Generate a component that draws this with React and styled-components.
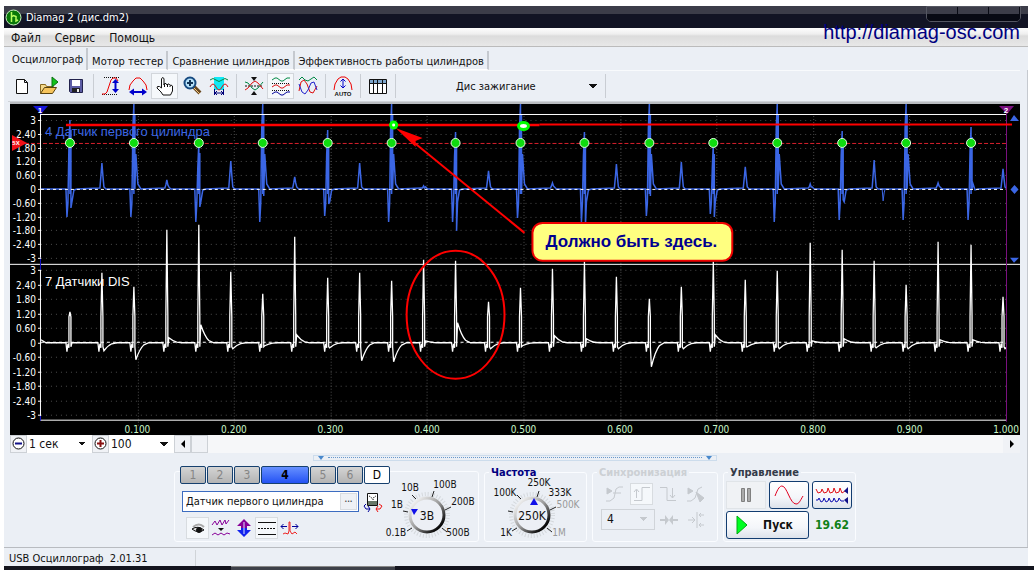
import { useState } from 'react'
import styled, { createGlobalStyle, css } from 'styled-components'

const channels = ['1', '2', '3', '4', '5', '6', 'D']
const tabs = ['Осциллограф', 'Мотор тестер', 'Сравнение цилиндров', 'Эффективность работы цилиндров']
const scale = ['3', '2.40', '1.80', '1.20', '0.60', '0', '-0.60', '-1.20', '-1.80', '-2.40', '-3']

// one entry per spark: [top, dip before, dip after]
const firstCylinder = [
    [16, 113, 104], [59, 85, 85], [0, 113, 85], [76, 85, 87], [39, 118, 103], [57, 85, 85],
    [0, 118, 92], [73, 85, 85], [26, 112, 100], [59, 85, 85], [0, 118, 85], [82, 85, 85],
    [28, 118, 127], [67, 85, 85], [0, 114, 90], [79, 85, 85], [28, 118, 122], [60, 85, 85],
    [0, 112, 92], [58, 85, 85], [40, 110, 113], [63, 85, 85], [0, 118, 85], [80, 85, 85],
    [27, 116, 96], [56, 85, 85], [0, 116, 85], [79, 85, 85], [23, 116, 85], [65, 85, 85],
]

// one entry per spark: [top, offset of the tail from zero]
const dis = [
    [208, 0], [169, 8], [183, 17], [126, -5], [121, -18], [168, 6], [190, 3], [133, -8],
    [174, 5], [169, 18], [177, 19], [156, -2], [157, -20], [198, 6], [184, 3], [165, -7],
    [158, -4], [173, 6], [195, 24], [183, 6], [158, -8], [176, 4], [167, 6], [139, -2],
    [146, -4], [157, 5], [181, 6], [138, -3], [141, -3], [193, 6],
]

const sparkX = i => Math.round(60 + i * 32.2)

const bluePath = firstCylinder.reduce((path, [top, before, after], i) => {
    const x = sparkX(i)

    // idle cylinder: only a short crosstalk peak
    if (i % 2) {
        return path + `L${x - 2} 84 L${x - 1} ${Math.round((top + 85) / 2)} L${x} ${top} L${x + 1} ${Math.round((top + 85) / 2)} L${x + 2} 83 L${x + 4} 85 `
    }

    const tail = top === 0 ? `L${x + 1} ${after} L${x + 2} 50 L${x + 4} 80` : `L${x + 1} ${after} L${x + 2} ${after > 90 ? 98 : 80} L${x + 4} 86`
    return path + `L${x - 4} 85 L${x - 3} ${before} L${x - 2} 99 L${x - 1} ${top + 24} L${x} ${top} L${x} 90 L${x + 1} ${top + 10} ${tail} L${x + 7} 85 `
}, 'M31 85 ')

const whitePath = dis.reduce((path, [top, tail], i) => {
    const x = sparkX(i)
    return path + `L${x - 4} 239 L${x - 3} 248 L${x - 2} 240 L${x - 1} 244 L${x - 1} 213 L${x} ${top} L${x + 1} 213 L${x + 1} 243 ` +
        `L${x + 2} ${239 + tail} Q${x + 6} ${239 + tail / 3} ${x + 10} ${239 + tail / 8} L${x + 15} 239 `
}, 'M31 236 L36 239 ')

const Icon = ({ children, size = 20 }) => (
    <svg width={size} height={size} viewBox="0 0 20 20" fill="none" stroke="#111" aria-hidden="true">{children}</svg>
)

const NewIcon = () => <Icon><path d="M4.500 3.500h8l3 3v11h-11z M12.500 3.500v3h3" fill="#fff" /></Icon>
const OpenIcon = () => (
    <Icon>
        <path d="M1.500 17.500v-9h5l1 2h7v3" fill="#f4d98b" stroke="#8a6a20" />
        <path d="M1.500 17.500l4-6h12l-4 6z" fill="#f6c45c" stroke="#59420e" />
        <path d="M13 1l6 5-6 5z" fill="#12c21a" stroke="#087010" />
    </Icon>
)
const SaveIcon = () => (
    <Icon>
        <path d="M3.500 3.500h13v13h-12l-1-1z" fill="#5c5ca4" stroke="#22224c" />
        <path d="M6 4h8v6H6z" fill="#fff" stroke="none" />
        <path d="M6 12h8v4H6z" fill="#222" stroke="none" />
        <path d="M11 13h2v3h-2z" fill="#eee" stroke="none" />
    </Icon>
)
const RiseIcon = () => (
    <Icon>
        <path d="M3 1.500h15M1 18.500h16" strokeDasharray="1 1" />
        <path d="M1 18h3l2-2 2-6 2-6 2-2h3l2 3" stroke="#e00" />
        <path d="M14.500 5v10" stroke="#00c" strokeWidth="2" />
        <path d="M11 7l3.500-4L18 7zM11 13l3.500 4 3.500-4z" fill="#00c" stroke="none" />
    </Icon>
)
const SpanIcon = () => (
    <Icon>
        <path d="M1 14l1-5 3-4 3-3h4l3 3 3 4 1 5" stroke="#e00" />
        <path d="M5 16h10" stroke="#00c" strokeWidth="2" />
        <path d="M6 12.500L1 16l5 3.500zM14 12.500L19 16l-5 3.500z" fill="#00c" stroke="none" />
    </Icon>
)
const HandIcon = () => (
    <Icon>
        <path d="M6.500 12V3l1-1.500 1.500 1V9l.5-1.500h1.500L12 9l1-1h1l1 1.500 1-.5 1.500 1v5l-2 4H8l-2-3-4-4 .5-1.500h2z" fill="#fff" />
        <path d="M9.500 8v3M12.500 9v2M15 10v1" />
    </Icon>
)
const ZoomIcon = () => (
    <Icon>
        <path d="M12 11l6 6" stroke="#6b4a22" strokeWidth="4" />
        <path d="M12 12l6 6" stroke="#f1ca87" strokeWidth="1" />
        <circle cx="8" cy="7" r="5.500" fill="#b7e3fb" stroke="#174a80" strokeWidth="2" />
        <path d="M5 7h6M8 4v6" stroke="#135" strokeWidth="2" />
    </Icon>
)
const WindowIcon = () => (
    <Icon>
        <path d="M5 1h10v13H5z" fill="#12e8f4" stroke="none" />
        <path d="M1 4q3-3 6 0t6 0 6 0" stroke="#084" />
        <path d="M1 11q3-6 6 0t6 0 6 0" stroke="#d11" />
        <path d="M5.500 13v6M14.500 13v6M6 17h8M8 15l-2 2 2 2M12 15l2 2-2 2" stroke="#007" />
    </Icon>
)
const CrossIcon = () => (
    <Icon>
        <path d="M1 10h18" strokeDasharray="2 1" />
        <path d="M1 6l3 1 4 5 3 2 3-2 5-6" stroke="#084" />
        <path d="M1 14l3-2 4-5 3-2 3 2 5 6" stroke="#d11" />
        <path d="M7 1h6l-3 4zM7 19h6l-3-4z" fill="#111" stroke="none" />
    </Icon>
)
const StackIcon = () => (
    <Icon>
        <path d="M1 4l3-2h2l4 3h2l4-3h3" stroke="#084" />
        <path d="M1 7.500h18M1 14.500h18" strokeDasharray="1 1" />
        <path d="M1 11l3-2h2l4 3h2l4-3h3" stroke="#d11" />
        <path d="M1 18l3-2h2l4 3h2l4-3h3" stroke="#009" />
    </Icon>
)
const OverlayIcon = () => (
    <Icon>
        <path d="M1 4l3-3 3 3 3 1 3-2 3-2 3 3" stroke="#084" />
        <path d="M1 15l2-9 3-2 3 4 3 8 3 1 4-7" stroke="#d11" />
        <path d="M1 8l3 8 3 2 3-4 3-7 3-1 3 8" stroke="#22c" />
    </Icon>
)
const AutoIcon = () => (
    <Icon>
        <path d="M1 14l1-6 3-5 3-2h4l3 2 3 5 1 6" stroke="#e00" />
        <path d="M10 4v7M7.500 5.500L10 3l2.500 2.500M7.500 9.500L10 12l2.500-2.500" stroke="#00c" />
        <text x="10" y="20" textAnchor="middle" fontSize="6" fontWeight="700" fontFamily="Liberation Sans, sans-serif" fill="#111" stroke="none">AUTO</text>
    </Icon>
)
const TableIcon = () => (
    <Icon>
        <path d="M1.500 3.500h17v14h-17z" fill="#fff" />
        <path d="M2 4h16v3H2z" fill="#7ea6cc" stroke="none" />
        <path d="M1.500 7.500h17M5.500 4v13M9.500 4v13M14.500 4v13" />
    </Icon>
)
const DeviceIcon = () => (
    <Icon>
        <path d="M4.500 1.500h10v12h-10z" fill="#fff" />
        <path d="M5 9h9v4H5z" fill="#687868" stroke="none" />
        <path d="M6 4l2 1 2 3 1-3 2-1" strokeDasharray="1 1" />
        <path d="M3 12l-2 2 2 3h4M5 14l2 3-2 3" stroke="#009" />
        <path d="M16 12l3 2-2 3h-4M15 14l-2 3 2 3" stroke="#e11" />
    </Icon>
)
const EyeIcon = () => (
    <Icon>
        <path d="M5 9q6-5 11 0" stroke="#aaa" strokeWidth="2" />
        <path d="M4 11q6-4 12 1-6 4-12-1z" fill="#ddd" />
        <circle cx="11" cy="12" r="2.500" fill="#111" />
    </Icon>
)
const NoiseIcon = () => (
    <Icon>
        <path d="M1 7l3-4 2 4 3-5 2 5 3-5 1 4 3-4" stroke="#809" />
        <path d="M7 10h6l-3 3z" fill="#111" stroke="none" />
        <path d="M1 17l3-2 3 2 3-2 3 2 3-2 3 1" stroke="#809" />
    </Icon>
)
const HeightIcon = () => (
    <Icon>
        <path d="M10 1l7 7h-4v3H7V8H3z" fill="#809" stroke="none" />
        <path d="M7 10h6v2h4l-7 7-7-7h4z" fill="#12e" stroke="none" />
        <path d="M10 4v12" stroke="#dce4ff" />
    </Icon>
)
const LinesIcon = () => <Icon><path d="M1 4.500h18M1 16.500h18" /><path d="M1 10.500h18" strokeDasharray="2 1" /></Icon>
const PulseIcon = () => (
    <Icon>
        <path d="M3 16l2-1 3 1 1-3V4h1v9l2 3 3-2 2 2" stroke="#e22" />
        <path d="M1 8.500h6M3.500 6L1 8.500 3.500 11" stroke="#009" />
        <path d="M12 8.500h6M15.500 6L18 8.500 15.500 11" stroke="#009" />
    </Icon>
)

const Knob = ({ value, marks, muted = [], pointer, id }) => (
    <KnobArt viewBox="8 0 88 68" role="img" aria-label={value}>
        <defs>
            <linearGradient id={id} x1="0" y1="0" x2="1" y2="1">
                <stop offset="0.1" stopColor="#f4f4f4" />
                <stop offset="0.5" stopColor="#999" />
                <stop offset="0.85" stopColor="#0a0a0a" />
            </linearGradient>
        </defs>
        <circle cx="45" cy="41" r="21" fill="none" stroke="#d4d8dc" strokeWidth="4" strokeDasharray="1 2" />
        <circle cx="45" cy="41" r="18" fill="#eceff5" />
        <circle cx="45" cy="41" r="17" fill="none" stroke={`url(#${id})`} strokeWidth="3" />
        <path d="M21 37l5 1M30 54l-5 3M30 21l4 4M52 17l-2 6M63 36l6-3M60 54l5 4" stroke="#222" fill="none" />
        <path d={pointer} fill="#1010e8" />
        <text x="45" y="46" textAnchor="middle" fontSize="12">{value}</text>
        {marks.map(([label, x, y]) => (
            <text key={label} x={x} y={y} fontSize="10" textAnchor="middle" fill={muted.includes(label) ? '#999' : '#111'}>{label}</text>
        ))}
    </KnobArt>
)

const Chart = () => (
    <Scope viewBox="0 0 1011 331" role="img" aria-label="Осциллограмма">
        <clipPath id="plot"><path d="M31 0H997V331H31z" /></clipPath>
        <g stroke="#4c4c4c" strokeDasharray="1 4">
            {scale.map((_, i) => <path key={i} d={`M31 ${Math.round(16 + i * 13.8) + 0.5}H997M31 ${Math.round(166 + i * 14.5) + 0.5}H997`} />)}
        </g>
        <g stroke="#4c4c4c" strokeDasharray="1 2">
            {[1, 2, 3, 4, 5, 6, 7, 8, 9].map(i => <path key={i} d={`M${Math.round(31 + i * 96.6) + 0.5} 12V322`} />)}
        </g>
        <path d="M15 39.500H997" stroke="#d8202c" strokeDasharray="4 2" />
        <path d="M31 238.500H997" stroke="#fff" strokeDasharray="3 3" />
        <g clipPath="url(#plot)" fill="none">
            <path d={bluePath} stroke="#3b66e4" strokeWidth="1.500" />
            <path d="M31 85.500H997" stroke="#fff" strokeDasharray="3 3" />
            <path d="M873 85l1 12 1-8 1-4" stroke="#3b66e4" />
            <path d={whitePath} stroke="#fff" strokeWidth="1.300" />
        </g>
        <path d="M31 10.500H997M0 160.500H1011M31 316.500H997M30.500 10V154M30.500 166V317" stroke="#fff" fill="none" />
        <path d="M30.500 3V10M30.500 154V166M30.500 312V317" stroke="#1010c8" />
        <path d="M997.500 4V318" stroke="#7a1080" />
        {scale.map((label, i) => (
            <g key={label} fontSize="10" fill="#fff" textAnchor="end">
                <path d={`M28 ${Math.round(16 + i * 13.8) + 0.5}h3M28 ${Math.round(166 + i * 14.5) + 0.5}h3`} stroke="#fff" />
                <text x="26" y={Math.round(20 + i * 13.8)}>{label}</text>
                <text x="26" y={Math.round(170 + i * 14.5)}>{label}</text>
            </g>
        ))}
        {[1, 2, 3, 4, 5, 6, 7, 8, 9, 10].map(i => (
            <text key={i} x={31 + i * 96.6} y="329" fontSize="10" fill="#c9f7c9" textAnchor="middle">{(i / 10).toFixed(3)}</text>
        ))}
        <g fontFamily="Liberation Sans, Arial, sans-serif" fontSize="13">
            <text x="35" y="32" fill="#3b66e4">4 Датчик первого цилиндра</text>
            <text x="35" y="182" fill="#fff">7 Датчики DIS</text>
        </g>
        <path d="M23 2h15l-7 8z" fill="#1414d8" />
        <path d="M990 2h15l-7 8z" fill="#7a1080" />
        <path d="M2 31l15 8-15 8z" fill="#f01018" />
        <g fontFamily="Liberation Sans, Arial, sans-serif" fontSize="8" fontWeight="700" fill="#fff" textAnchor="middle">
            <text x="30" y="9">1</text>
            <text x="997" y="9">2</text>
            <text x="6" y="41" fontSize="6">5X</text>
        </g>
        <path d="M1001 17l4-6 5 6zM1001 154l4 5 5-5zM1005.500 81l4 4.500-4 4.500-4-4.500z" fill="#3b66e4" />
        {firstCylinder.map((_, i) => i % 2 === 0 && (
            <circle key={i} cx={sparkX(i)} cy="39" r="4.500" fill="#0fdc0f" stroke="#dfffdf" />
        ))}
        <path d="M56 21H530" stroke="#f00" strokeWidth="2.500" />
        <path d="M530 20.500H1003" stroke="#f00" strokeWidth="2" />
        <path d="M515 129L394 30" stroke="#f00" strokeWidth="2" />
        <path d="M386 24l27 10-7 3 0 6z" fill="#f00" />
        <ellipse cx="446" cy="211" rx="49" ry="64" fill="none" stroke="#f00" strokeWidth="2" />
        <g fill="#fff" stroke="#0f0" strokeWidth="3">
            <ellipse cx="384" cy="21" rx="3" ry="3" />
            <ellipse cx="514" cy="22" rx="5" ry="3.500" />
        </g>
        <rect x="523" y="119" width="200" height="38" rx="10" fill="#ffff80" stroke="#e00" strokeWidth="2" />
        <text x="622" y="143" textAnchor="middle" fontFamily="Liberation Sans, Arial, sans-serif" fontSize="17" fontWeight="700" fill="#000090">Должно быть здесь.</text>
    </Scope>
)

function App() {
    const [tab, setTab] = useState(tabs[0])
    const [channel, setChannel] = useState('4')
    const [name, setName] = useState('Датчик первого цилиндра')

    return (
        <Page>
            <GlobalStyle />
            <Window>
                <TitleBar>
                    <svg width="17" height="17" viewBox="0 0 17 17" fill="none" aria-hidden="true">
                        <circle cx="8.500" cy="8.500" r="7.500" fill="#087808" stroke="#c8f0c0" />
                        <path d="M6.500 3v10M6.500 8l2-1.500 2.500 1V12l2-1" stroke="#b8ff60" strokeWidth="1.500" />
                    </svg>
                    <Title>Diamag 2 (дис.dm2)</Title>
                    <WindowButtons>
                        <button aria-label="Свернуть" />
                        <button aria-label="Развернуть" />
                        <button aria-label="Закрыть" />
                    </WindowButtons>
                </TitleBar>
                <SiteLink href="http://diamag-osc.com">http://diamag-osc.com</SiteLink>

                <MenuBar>
                    <button>Файл</button>
                    <button>Сервис</button>
                    <button>Помощь</button>
                </MenuBar>

                <Tabs role="tablist">
                    {tabs.map(label => (
                        <Tab key={label} role="tab" aria-selected={label === tab} $active={label === tab} onClick={() => setTab(label)}>{label}</Tab>
                    ))}
                </Tabs>

                <Body>
                    <Toolbar>
                        <ToolButton aria-label="Новый"><NewIcon /></ToolButton>
                        <ToolButton aria-label="Открыть"><OpenIcon /></ToolButton>
                        <ToolButton aria-label="Сохранить"><SaveIcon /></ToolButton>
                        <Separator />
                        <ToolButton aria-label="Амплитуда"><RiseIcon /></ToolButton>
                        <ToolButton aria-label="Период"><SpanIcon /></ToolButton>
                        <ToolButton $pressed aria-label="Рука"><HandIcon /></ToolButton>
                        <ToolButton aria-label="Масштаб"><ZoomIcon /></ToolButton>
                        <ToolButton aria-label="Окно"><WindowIcon /></ToolButton>
                        <Separator />
                        <ToolButton aria-label="Сжать"><CrossIcon /></ToolButton>
                        <ToolButton $pressed aria-label="Раздельно"><StackIcon /></ToolButton>
                        <ToolButton aria-label="Совместно"><OverlayIcon /></ToolButton>
                        <Separator />
                        <ToolButton aria-label="Авто"><AutoIcon /></ToolButton>
                        <Separator />
                        <ToolButton aria-label="Таблица"><TableIcon /></ToolButton>
                        <Separator />
                        <PresetSelect aria-label="Режим"><option>Дис зажигание</option></PresetSelect>
                        <Separator />
                    </Toolbar>

                    <ScopeFrame>
                        <Chart />
                        <ScrollRow>
                            <SmallButton aria-label="Уменьшить">
                                <svg width="13" height="13" viewBox="0 0 13 13" fill="none"><circle cx="6.500" cy="6.500" r="5.500" fill="#fff" stroke="#111" /><path d="M3 6.500h7" stroke="#118" strokeWidth="2" /></svg>
                            </SmallButton>
                            <RangeSelect aria-label="Длительность"><option>1 сек</option></RangeSelect>
                            <SmallButton aria-label="Увеличить">
                                <svg width="13" height="13" viewBox="0 0 13 13" fill="none"><circle cx="6.500" cy="6.500" r="5.500" fill="#fff" stroke="#111" /><path d="M3 6.500h7M6.500 3v7" stroke="#811" strokeWidth="2" /></svg>
                            </SmallButton>
                            <RangeSelect aria-label="Масштаб, %"><option>100</option></RangeSelect>
                            <SmallButton aria-label="Влево"><svg width="6" height="8" viewBox="0 0 6 8"><path d="M5 0v8L1 4z" /></svg></SmallButton>
                            <SmallButton aria-label="Ползунок" />
                            <Track />
                            <SmallButton $flat aria-label="Вправо"><svg width="6" height="8" viewBox="0 0 6 8"><path d="M1 0v8l4-4z" /></svg></SmallButton>
                        </ScrollRow>
                    </ScopeFrame>

                    <Splitter aria-label="Свернуть панель"><i /><span /><i /></Splitter>

                    <Controls>
                        <ChannelGroup>
                            <ChannelPart>
                                <ChannelRow>
                                    {channels.map(c => (
                                        <ChannelButton key={c} $active={c === channel} $light={c === 'D'} onClick={() => setChannel(c)}>{c}</ChannelButton>
                                    ))}
                                </ChannelRow>
                                <NameRow>
                                    <NameField>
                                        <input aria-label="Название канала" value={name} onChange={e => setName(e.target.value)} />
                                        <button aria-label="Выбрать">•••</button>
                                    </NameField>
                                    <FlatButton aria-label="Прибор"><DeviceIcon /></FlatButton>
                                </NameRow>
                                <IconRow>
                                    <FlatButton $pressed aria-label="Показать"><EyeIcon /></FlatButton>
                                    <FlatButton aria-label="Фильтр"><NoiseIcon /></FlatButton>
                                    <FlatButton aria-label="Инверсия"><HeightIcon /></FlatButton>
                                    <FlatButton $pressed aria-label="Линии"><LinesIcon /></FlatButton>
                                    <FlatButton aria-label="Импульс"><PulseIcon /></FlatButton>
                                </IconRow>
                            </ChannelPart>
                            <Knob
                                id="range"
                                value="3В"
                                pointer="M29 35h7l-4 6z"
                                marks={[['10В', 28, 17], ['100В', 63, 14], ['200В', 81, 31], ['500В', 76, 62], ['0.1В', 14, 62], ['1В', 15, 34]]}
                            />
                        </ChannelGroup>

                        <RateGroup>
                            <legend>Частота</legend>
                            <Knob
                                id="rate"
                                value="250K"
                                pointer="M43 31l4-7 4 7z"
                                muted={['500K', '1M']}
                                marks={[['100K', 18, 22], ['250K', 52, 12], ['333K', 73, 22], ['500K', 81, 34], ['1K', 19, 62], ['1M', 72, 62]]}
                            />
                        </RateGroup>

                        <Group disabled>
                            <legend>Синхронизация</legend>
                            <SyncGrid>
                                <FlatButton aria-label="Уровень"><Icon><g stroke="#c5c9ce"><path d="M2 4l5 3-5 3z" fill="#c5c9ce" /><path d="M1 17h4l4-3 2-9 3-2h4M8 9h8" /></g></Icon></FlatButton>
                                <FlatButton $pressed aria-label="По фронту"><Icon><g stroke="#c5c9ce"><path d="M2 16.500h8v-13h8M4.500 14V6M2 8l2.500-3L7 8" /></g></Icon></FlatButton>
                                <FlatButton aria-label="По спаду"><Icon><g stroke="#c5c9ce"><path d="M1 3.500h7v13h9M13.500 4v10M11 11l2.500 3 2.500-3" /></g></Icon></FlatButton>
                                <FlatButton aria-label="Авто"><Icon><g stroke="#c5c9ce"><path d="M2 4l5 3-5 3zM10 8l8 6-4 4z" fill="#c5c9ce" /><path d="M1 17h4l4-3 3-9 4-2" /></g></Icon></FlatButton>
                                <SyncSelect aria-label="Канал синхронизации"><option>4</option></SyncSelect>
                                <FlatButton aria-label="Сжать"><Icon><path d="M1 9h5V5l4 5-4 5v-4H1zM19 9h-5V5l-4 5 4 5v-4h5z" fill="#c5c9ce" stroke="none" /></Icon></FlatButton>
                                <FlatButton aria-label="Позиция"><Icon><path d="M2 10h7M6 7l3 3-3 3M11 2v16M18 5h-5M15 3l-2 2 2 2M18 15h-5M15 13l-2 2 2 2" stroke="#c5c9ce" /></Icon></FlatButton>
                            </SyncGrid>
                        </Group>

                        <Group>
                            <legend>Управление</legend>
                            <RunGrid>
                                <PauseButton aria-label="Пауза">
                                    <svg width="12" height="16" viewBox="0 0 12 16"><path d="M1.500 1.500h3v13h-3zM7.500 1.500h3v13h-3z" fill="#aaa" stroke="#808080" /></svg>
                                </PauseButton>
                                <BlueButton aria-label="Один канал">
                                    <svg width="30" height="20" viewBox="0 0 30 20" fill="none"><path d="M1 11C4 3 6 1 8 1c5 0 8 18 14 18 3 0 4-3 7-8" stroke="#e00020" /></svg>
                                </BlueButton>
                                <BlueButton aria-label="Все каналы">
                                    <svg width="34" height="20" viewBox="0 0 34 20" fill="none">
                                        <path d="M1 4l2 4 3-1 1-3 2 4 3-1 1-4 2 5 3-1 1-4 2 5 3-1 1-4 2 5 3-2" stroke="#e01018" />
                                        <path d="M1 15h2l1-2 2 4 2-1 1-3 2 4 2-1 1-3 2 4 2-1 1-3 2 4 2-1 1-3 2 3h3" stroke="#1010b0" />
                                        <path d="M33 2v7l-4-3zM33 12v7l-4-4z" fill="#118" />
                                    </svg>
                                </BlueButton>
                                <StartButton>
                                    <svg width="12" height="20" viewBox="0 0 12 20"><path d="M1 1l10 9-10 9z" fill="#0f2" stroke="#0a1" /></svg>
                                    <span>Пуск</span>
                                </StartButton>
                                <Voltage>19.62</Voltage>
                            </RunGrid>
                        </Group>
                    </Controls>
                </Body>

                <StatusBar><span>USB Осциллограф&nbsp; 2.01.31</span></StatusBar>
            </Window>
            <Taskbar><span /></Taskbar>
        </Page>
    )
}

export default App

const GlobalStyle = createGlobalStyle`
    * {
        box-sizing: border-box;
    }

    body {
        margin: 0;
        background: #fff;
    }

    body, button, input, select {
        font-family: "DejaVu Sans Condensed", "DejaVu Sans", sans-serif;
        font-size: 11px;
        color: #111;
    }

    button, select {
        border: 0;
        padding: 0;
        background: none;
    }

    svg {
        display: block;
    }
`

const arrow = css`
    appearance: none;
    background-image: linear-gradient(45deg, transparent 50%, #111 50%), linear-gradient(-45deg, transparent 50%, #111 50%);
    background-size: 4px 4px;
    background-repeat: no-repeat;
`

const Page = styled.div`
    padding: 6px 6px 0 4px;
`

const Window = styled.div`
    position: relative;
    background: #ebeff5;
`

const TitleBar = styled.header`
    display: flex;
    align-items: center;
    height: 22px;
    padding: 0 7px 0 1px;
    background: linear-gradient(#3c3d49 0 8px, #121424 8px);
`

const Title = styled.h1`
    flex: 1;
    margin: 0 0 0 4px;
    font-size: 11px;
    font-weight: 400;
    color: #fff;
`

const WindowButtons = styled.div`
    display: flex;
    align-self: flex-start;
    border: 1px solid #555762;
    border-radius: 0 0 5px 5px;
    overflow: hidden;

    button {
        width: 31px;
        height: 14px;
        background: linear-gradient(#3c3d49 0 7px, #080a14 7px);
        border-right: 1px solid #080a14;
    }
`

const SiteLink = styled.a`
    position: absolute;
    top: 15px;
    right: 8px;
    font: 20px/22px "Liberation Sans", Arial, sans-serif;
    color: #000080;
    text-decoration: none;
`

const MenuBar = styled.nav`
    display: flex;
    gap: 14px;
    height: 19px;
    padding: 2px 7px 0;
    background: linear-gradient(#fdfdfd, #efefef 6px, #dcdcdc 8px, #e8e8e8);
    border-bottom: 1px solid #bbb;

    button {
        font-size: 12px;
    }
`

const Tabs = styled.div`
    display: flex;
    height: 23px;
    padding-left: 1px;
`

const Tab = styled.button`
    padding: ${props => props.$active ? '0 3px 0 7px' : '2px 3px 0 4px'};
    border-right: 2px solid #c5c9cf;
    margin-top: ${props => props.$active ? '1px' : '4px'};
    border-bottom: ${props => props.$active ? '0' : '1px solid #fff'};
`

const Body = styled.main`
    padding: 0 7px 0 6px;
    border-left: 1px solid #fff;
    border-right: 1px solid #c5c9cf;
    margin-left: -1px;
`

const Toolbar = styled.div`
    display: flex;
    align-items: center;
    height: 32px;
    margin-left: -2px;
    border-top: 1px solid #f8fafc;
    border-bottom: 1px solid #cfd3d8;
`

const ToolButton = styled.button`
    display: grid;
    place-items: center;
    width: 27px;
    height: 26px;
    background: ${props => props.$pressed ? '#f5f8fb' : 'none'};
    border: 1px solid ${props => props.$pressed ? '#d2d6db' : 'transparent'};
`

const Separator = styled.span`
    width: 1px;
    height: 24px;
    margin: 0 3px 0 4px;
    background: #c9cdd3;
`

const PresetSelect = styled.select`
    ${arrow}
    width: 202px;
    height: 24px;
    padding-left: 57px;
    background-position: right 8px center, right 4px center;
`

const ScopeFrame = styled.div`
    border-top: 2px solid #b9bcc0;
`

const Scope = styled.svg`
    width: 100%;
    height: auto;
    background: #000;
`

const ScrollRow = styled.div`
    display: flex;
    height: 18px;
    background: #f6f7f9;
`

const SmallButton = styled.button`
    display: grid;
    place-items: center;
    width: 17px;
    background: #f0f2f6;
    border: 1px solid ${props => props.$flat ? 'transparent' : '#cdd1d6'};
`

const RangeSelect = styled.select`
    ${arrow}
    width: 65px;
    padding-left: 2px;
    font-size: 12px;
    background-color: #fff;
    background-position: right 10px center, right 6px center;
`

const Track = styled.div`
    flex: 1;
`

const Splitter = styled.button`
    display: flex;
    align-items: center;
    gap: 4px;
    width: 40%;
    height: 6px;
    margin: 2px auto 4px;
    padding: 0 4px;
    border: 1px solid #ccdcec;

    i {
        border: 3px solid transparent;
        border-top: 4px solid #4888cc;
        border-bottom: 0;
    }

    span {
        flex: 1;
        border-top: 1px dotted #6898cc;
    }
`

const Controls = styled.div`
    display: flex;
    justify-content: center;
    gap: 5px;
    height: 82px;
    padding-top: 1px;
    padding-bottom: 5px;
`

const Group = styled.fieldset`
    min-width: 0;
    margin: 0;
    padding: 0 2px;
    border: 1px solid #fafcff;
    border-radius: 3px;

    legend {
        height: 14px;
        padding: 0 2px;
        margin-left: 2px;
        font-weight: 700;
        line-height: 14px;
        color: ${props => props.disabled ? '#ccd0d4' : '#333a48'};
    }
`

const KnobArt = styled.svg`
    flex: none;
    width: 88px;
    height: 68px;
    fill: #111;
    overflow: visible;
`

const RateGroup = styled(Group)`
    padding: 0 3px 0 10px;

    legend {
        margin-left: -6px;
        color: #000080;
    }

    ${KnobArt} {
        margin-top: -6px;
    }
`

const ChannelGroup = styled.div`
    display: flex;
    margin-top: 5px;
    padding-left: 5px;
    border: 1px solid #fafcff;
    border-radius: 3px;

    > ${KnobArt} {
        margin-top: 2px;
    }
`

const ChannelPart = styled.div`
    margin-top: -6px;
`

const ChannelRow = styled.div`
    display: flex;
    gap: 1px;
`

const ChannelButton = styled.button`
    width: ${props => props.$active ? '48px' : '26px'};
    height: 18px;
    border: 1px solid #16406e;
    border-radius: 2px;
    font-size: 12px;
    font-weight: ${props => props.$active ? 700 : 400};
    color: ${props => props.$active || props.$light ? '#000' : '#858585'};
    background: ${props => props.$active ? 'linear-gradient(#6690ff, #2452f4)' : props.$light ? '#fff' : 'linear-gradient(#d4d4d4, #b4b4b4)'};
`

const NameRow = styled.div`
    display: flex;
    gap: 2px;
    margin: 7px 0 4px 2px;
`

const NameField = styled.div`
    display: flex;
    width: 177px;
    height: 21px;
    padding: 1px;
    border: 1px solid #3c6cc0;
    background: #fff;

    input {
        flex: 1;
        min-width: 0;
        padding: 0 2px;
        border: 0;
        outline: 0;
    }

    button {
        width: 17px;
        font-size: 5px;
        background: #eef1f5;
        border: 1px solid #d8dce0;
    }
`

const FlatButton = styled.button`
    display: grid;
    place-items: center;
    width: 23px;
    height: 22px;
    background: ${props => props.$pressed ? '#f5f8fb' : 'none'};
    border: 1px solid ${props => props.$pressed ? '#d8dce0' : 'transparent'};
`

const IconRow = styled.div`
    display: flex;
    margin-left: 6px;
`

const SyncGrid = styled.div`
    display: grid;
    grid-template-columns: 27px 27px 27px 27px;
    justify-items: center;
    gap: 4px 0;
    width: 120px;
    padding: 3px 6px;
`

const SyncSelect = styled.select`
    ${arrow}
    grid-column: span 2;
    width: 54px;
    height: 21px;
    padding-left: 5px;
    border: 1px solid #d0d4d9;
    font-size: 12px;
    color: #111;
    opacity: 1;
    background-image: linear-gradient(45deg, transparent 50%, #c5c9ce 50%), linear-gradient(-45deg, transparent 50%, #c5c9ce 50%);
    background-position: right 10px center, right 6px center;
`

const RunGrid = styled.div`
    display: grid;
    grid-template-columns: 40px 40px 40px;
    grid-template-rows: 28px 28px;
    gap: 2px 3px;
    padding: 1px 1px 0 0;
`

const PauseButton = styled.button`
    display: grid;
    place-items: center;
    background: #f0f2f5;
    border: 1px solid #e0e4e8;
`

const BlueButton = styled.button`
    display: grid;
    place-items: center;
    border: 1px solid #123c70;
    border-radius: 3px;
    background: linear-gradient(#fff, #f4f6fa 60%, #dde2ea);
`

const StartButton = styled(BlueButton)`
    display: flex;
    align-items: center;
    grid-column: span 2;
    padding-left: 9px;
    font-size: 12px;
    font-weight: 700;

    span {
        flex: 1;
    }
`

const Voltage = styled.output`
    align-self: center;
    font-size: 12px;
    font-weight: 700;
    color: #108018;
    text-align: center;
`

const StatusBar = styled.footer`
    height: 19px;
    padding: 2px 0 0 5px;
    border-top: 1px solid #b8bbc0;
    line-height: 18px;

    span {
        display: inline-block;
        width: 187px;
        height: 16px;
        border-right: 1px solid #d0d4d8;
        white-space: nowrap;
    }
`

const Taskbar = styled.div`
    height: 4px;
    background: #14151e;
    margin-right: -6px;

    span {
        display: block;
        width: 16%;
        height: 4px;
        margin-left: 22%;
        border-top: 1px solid #888;
        background: #3d4048;
    }
`
